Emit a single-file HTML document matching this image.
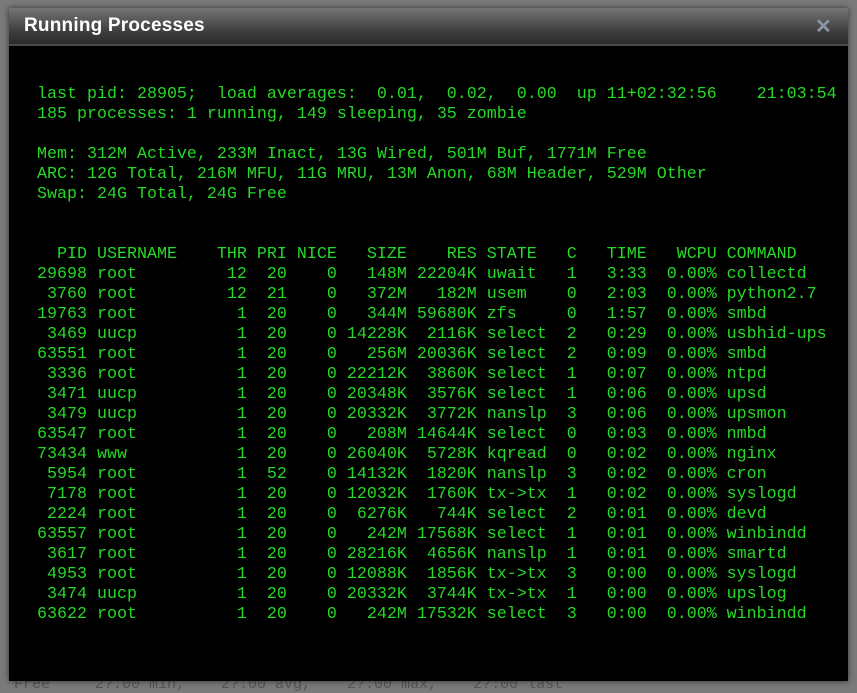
<!DOCTYPE html>
<html><head><meta charset="utf-8"><style>
html,body{margin:0;padding:0;width:857px;height:692px;overflow:hidden;background:#7a7a7a;font-family:"Liberation Sans",sans-serif;}
.bgtxt{position:absolute;left:14px;top:676px;color:#555;font:15px "Liberation Mono",monospace;white-space:pre;}
.dlg{position:absolute;left:9px;top:8px;width:839px;height:673px;background:#000;box-shadow:0 0 6px rgba(0,0,0,.6);}
.title{position:absolute;left:0;top:0;width:839px;height:36px;background:linear-gradient(#747474,#3a3a3a 70%,#2c2c2c);border-bottom:2px solid #4a4a4a;}
.title span{position:absolute;left:15px;top:7px;color:#fff;font-weight:bold;font-size:19px;letter-spacing:0.2px;}
.x{position:absolute;left:806px;top:6px;color:#8a96a6;font-weight:bold;font-size:20px;}
pre{position:absolute;left:28px;top:77px;margin:0;color:#28d828;font:16.67px/20px "Liberation Mono",monospace;}
</style></head><body>
<div class="bgtxt">Free     2?:00 min,    2?:00 avg,    2?:00 max,    2?:00 last</div>
<div class="dlg">
<div class="title"><span>Running Processes</span><div class="x">✕</div></div>
<pre>last pid: 28905;  load averages:  0.01,  0.02,  0.00  up 11+02:32:56    21:03:54
185 processes: 1 running, 149 sleeping, 35 zombie

Mem: 312M Active, 233M Inact, 13G Wired, 501M Buf, 1771M Free
ARC: 12G Total, 216M MFU, 11G MRU, 13M Anon, 68M Header, 529M Other
Swap: 24G Total, 24G Free


  PID USERNAME    THR PRI NICE   SIZE    RES STATE   C   TIME   WCPU COMMAND
29698 root         12  20    0   148M 22204K uwait   1   3:33  0.00% collectd
 3760 root         12  21    0   372M   182M usem    0   2:03  0.00% python2.7
19763 root          1  20    0   344M 59680K zfs     0   1:57  0.00% smbd
 3469 uucp          1  20    0 14228K  2116K select  2   0:29  0.00% usbhid-ups
63551 root          1  20    0   256M 20036K select  2   0:09  0.00% smbd
 3336 root          1  20    0 22212K  3860K select  1   0:07  0.00% ntpd
 3471 uucp          1  20    0 20348K  3576K select  1   0:06  0.00% upsd
 3479 uucp          1  20    0 20332K  3772K nanslp  3   0:06  0.00% upsmon
63547 root          1  20    0   208M 14644K select  0   0:03  0.00% nmbd
73434 www           1  20    0 26040K  5728K kqread  0   0:02  0.00% nginx
 5954 root          1  52    0 14132K  1820K nanslp  3   0:02  0.00% cron
 7178 root          1  20    0 12032K  1760K tx-&gt;tx  1   0:02  0.00% syslogd
 2224 root          1  20    0  6276K   744K select  2   0:01  0.00% devd
63557 root          1  20    0   242M 17568K select  1   0:01  0.00% winbindd
 3617 root          1  20    0 28216K  4656K nanslp  1   0:01  0.00% smartd
 4953 root          1  20    0 12088K  1856K tx-&gt;tx  3   0:00  0.00% syslogd
 3474 uucp          1  20    0 20332K  3744K tx-&gt;tx  1   0:00  0.00% upslog
63622 root          1  20    0   242M 17532K select  3   0:00  0.00% winbindd</pre>
</div>
</body></html>
